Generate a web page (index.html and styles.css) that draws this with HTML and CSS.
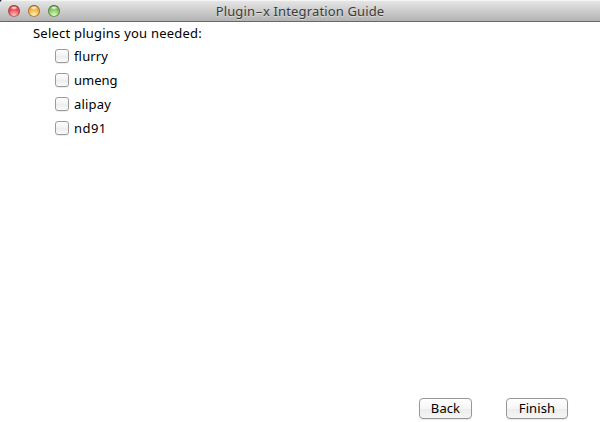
FILE: index.html
```html
<!DOCTYPE html>
<html lang="en">
<head>
<meta charset="utf-8">
<title>Plugin-x Integration Guide</title>
<link rel="stylesheet" href="styles.css">
</head>
<body>
<div class="window">
  <header class="titlebar">
    <div class="lights">
      <span class="light close"></span>
      <span class="light minimize"></span>
      <span class="light maximize"></span>
    </div>
    <h1 class="title">Plugin<span class="hyphen">-</span>x Integration Guide</h1>
  </header>
  <main class="content">
    <p class="prompt">Select plugins you needed:</p>
    <div class="options">
      <label class="option"><input type="checkbox" class="box"><span class="flurry">flurry</span></label>
      <label class="option"><input type="checkbox" class="box"><span class="umeng">umeng</span></label>
      <label class="option"><input type="checkbox" class="box"><span class="alipay">alipay</span></label>
      <label class="option"><input type="checkbox" class="box"><span class="nd">nd91</span></label>
    </div>
  </main>
  <footer class="actions">
    <button class="button back"><span class="caption">Back</span></button>
    <button class="button finish"><span class="caption">Finish</span></button>
  </footer>
</div>
</body>
</html>
```
FILE: styles.css
```css
* { box-sizing: border-box; }
body {
  margin: 0;
  background: #18283f;
  color: #000;
  font: 13px/18px "Noto Sans", "Open Sans", sans-serif;
}
.window {
  display: flex;
  flex-direction: column;
  height: 422px;
  overflow: hidden;
  background: #fff;
  border-radius: 4px 0 0 0;
}
.titlebar {
  display: grid;
  grid-template-columns: 1fr auto 1fr;
  align-items: center;
  flex: none;
  height: 22px;
  padding: 0 8px;
  border-bottom: 1px solid #686868;
  background: linear-gradient(#e8e8e8, #b3b3b3);
  box-shadow: inset 0 1px #f4f4f4;
}
.lights { display: flex; gap: 8px; padding-top: 1px; }
.light {
  width: 12px;
  height: 12px;
  border: 1px solid;
  border-radius: 50%;
}
.close {
  border-color: #8f3531 #a2474a #a87575;
  background: radial-gradient(ellipse 4px 2px at 50% 18%, #fff, transparent), radial-gradient(circle at 50% 95%, #ffc9c5, #ee5358 55%, #d42c35);
}
.minimize {
  border-color: #8d5b24 #a17334 #a68b60;
  background: radial-gradient(ellipse 4px 2px at 50% 18%, #fff, transparent), radial-gradient(circle at 50% 95%, #fff5ae, #f3b84e 55%, #d98b2b);
}
.maximize {
  border-color: #436d30 #56863f #779568;
  background: radial-gradient(ellipse 4px 2px at 50% 18%, #fff, transparent), radial-gradient(circle at 50% 95%, #e1ffc0, #8aca67 55%, #5b9e42);
}
.title {
  margin: 0;
  color: #3b3b3b;
  font-size: 13px;
  font-weight: 400;
  line-height: 18px;
  letter-spacing: .14px;
  text-shadow: 0 1px rgba(255, 255, 255, .45);
}
.hyphen {
  display: inline-block;
  margin: 0 2px 0 1.5px;
  transform: scaleX(1.7);
}
.content { flex: 1; padding: 2px 33px 0; }
.prompt { margin: 0; letter-spacing: .22px; }
.options { display: flex; flex-direction: column; gap: 6px; padding: 5px 0 0 22px; }
.option { display: flex; align-items: center; gap: 5px; height: 18px; }
.flurry { letter-spacing: .15px; font-variant-ligatures: common-ligatures; }
.alipay { letter-spacing: .2px; }
.nd { letter-spacing: .45px; }
.box {
  appearance: none;
  width: 14px;
  height: 14px;
  margin: 0;
  border: 1px solid #9c9c9c;
  border-radius: 3px;
  background: linear-gradient(#fff, #f2f2f2 50%, #ececec 51%, #fbfbfb);
  box-shadow: 0 1px 1px rgba(0, 0, 0, .08);
}
.actions {
  display: flex;
  justify-content: flex-end;
  gap: 34px;
  padding: 0 32px 3px;
}
.button {
  height: 21px;
  padding: 0 0 2px;
  border: 1px solid #979797;
  border-radius: 4px;
  background: linear-gradient(#fff, #f6f6f6 50%, #ececec 51%, #f5f5f5);
  box-shadow: 0 1px 1px rgba(0, 0, 0, .1);
  color: #000;
  font: inherit;
}
.caption { letter-spacing: .1px; }
.back { width: 53px; }
.finish { width: 62px; }
```
